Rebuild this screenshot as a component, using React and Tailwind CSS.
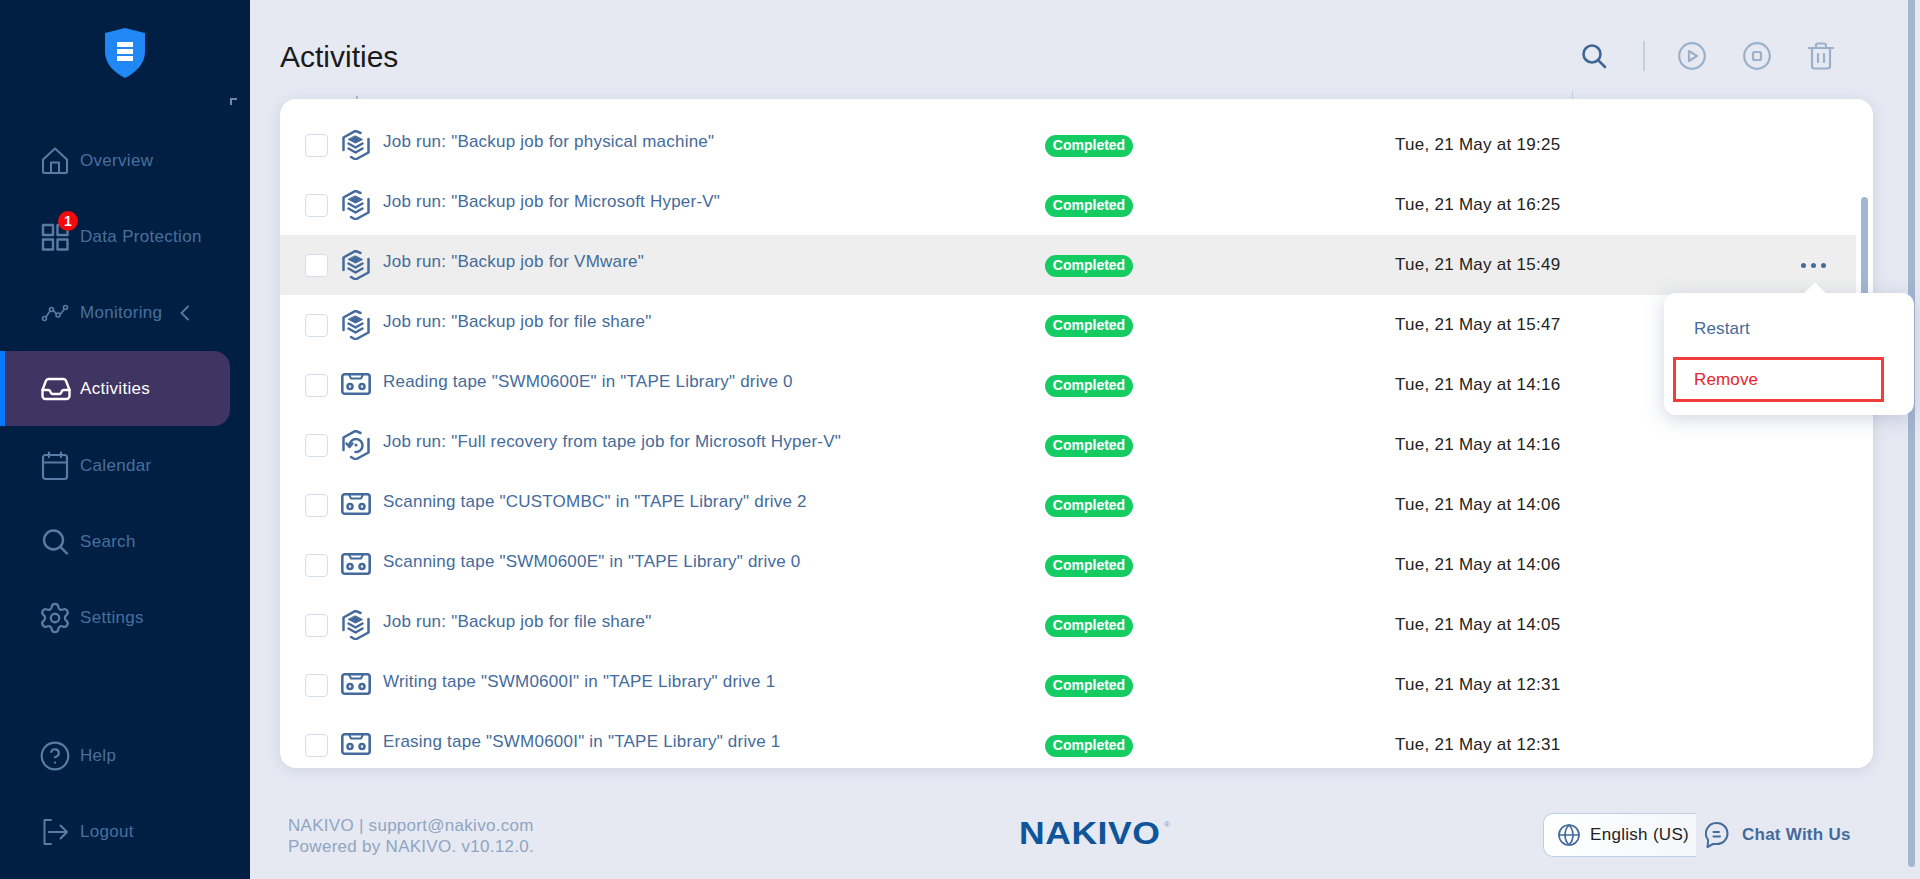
import React from "react";
import { Settings, CircleHelp, Globe } from "lucide-react";

const rows = [
  ["hex", 'Job run: "Backup job for physical machine"', "Tue, 21 May at 19:25"],
  ["hex", 'Job run: "Backup job for Microsoft Hyper-V"', "Tue, 21 May at 16:25"],
  ["hex", 'Job run: "Backup job for VMware"', "Tue, 21 May at 15:49"],
  ["hex", 'Job run: "Backup job for file share"', "Tue, 21 May at 15:47"],
  ["tape", 'Reading tape "SWM0600E" in "TAPE Library" drive 0', "Tue, 21 May at 14:16"],
  ["rec", 'Job run: "Full recovery from tape job for Microsoft Hyper-V"', "Tue, 21 May at 14:16"],
  ["tape", 'Scanning tape "CUSTOMBC" in "TAPE Library" drive 2', "Tue, 21 May at 14:06"],
  ["tape", 'Scanning tape "SWM0600E" in "TAPE Library" drive 0', "Tue, 21 May at 14:06"],
  ["hex", 'Job run: "Backup job for file share"', "Tue, 21 May at 14:05"],
  ["tape", 'Writing tape "SWM0600I" in "TAPE Library" drive 1', "Tue, 21 May at 12:31"],
  ["tape", 'Erasing tape "SWM0600I" in "TAPE Library" drive 1', "Tue, 21 May at 12:31"],
];

const Hexagon = () => (
  <>
    <path d="M18.5 3 L13.5 0.8 L1.5 7.5 V20" />
    <path d="M26.5 9 V22.5 L13.5 29.5 L9 27" />
  </>
);

function HexIcon() {
  return (
    <svg width="28" height="30" viewBox="0 0 28 30" fill="none" stroke="#446b9b" strokeWidth="2.5" strokeLinejoin="round" strokeLinecap="round">
      <Hexagon />
      <path d="M13.5 6 L20.5 9.5 L13.5 13 L6.5 9.5 Z" fill="#446b9b" strokeWidth="1" />
      <path d="M6.5 13.5 L13.5 17.5 L20.5 13.5" />
      <path d="M6.5 18.5 L13.5 22.5 L20.5 18.5" />
    </svg>
  );
}

function RecIcon() {
  return (
    <svg width="28" height="30" viewBox="0 0 28 30" fill="none" stroke="#446b9b" strokeWidth="2.5" strokeLinejoin="round" strokeLinecap="round">
      <Hexagon />
      <path d="M7.5 15.5 a6.5 6.5 0 1 1 6 6.5" />
      <path d="M4.5 13.5 L7.5 17 L10.5 13.5" />
      <circle cx="14" cy="15" r="1.6" fill="#446b9b" stroke="none" />
    </svg>
  );
}

function TapeIcon() {
  return (
    <svg width="30" height="22" viewBox="0 0 30 22" fill="none" stroke="#446b9b" strokeWidth="2.6" strokeLinejoin="round" className="mb-[3px]">
      <rect x="1.3" y="1.3" width="27.4" height="19.4" rx="2.5" />
      <path d="M8 1.5 L10 5.5 H20 L22 1.5" strokeWidth="2" />
      <circle cx="9" cy="13.5" r="2.5" />
      <circle cx="21" cy="13.5" r="2.5" />
    </svg>
  );
}

const nav = "#5a7ba3";

function NavSvg({ w = 28, h = 28, color = nav, sw = 2, children }) {
  return (
    <svg width={w} height={h} viewBox={`0 0 ${w} ${h}`} fill="none" stroke={color} strokeWidth={sw} strokeLinecap="round" strokeLinejoin="round">
      {children}
    </svg>
  );
}

const icons = {
  home: (
    <NavSvg>
      <path d="M2 12.5 L14 1.5 L26 12.5 V24.5 a1.5 1.5 0 0 1 -1.5 1.5 H3.5 a1.5 1.5 0 0 1 -1.5 -1.5 Z" />
      <path d="M10 26 V15.5 H18 V26" />
    </NavSvg>
  ),
  data: (
    <NavSvg sw={2.4}>
      <rect x="2" y="2" width="10" height="10" />
      <rect x="16.5" y="2" width="10" height="10" />
      <rect x="2" y="16.5" width="10" height="10" />
      <rect x="16.5" y="16.5" width="10" height="10" />
    </NavSvg>
  ),
  mon: (
    <NavSvg h={18} sw={1.6}>
      <path d="M5 13 L9 7 M12 6 L15.5 10 M19 10.5 L23.5 5" />
      <circle cx="3.5" cy="14.5" r="2" />
      <circle cx="10.5" cy="5.5" r="2" />
      <circle cx="17" cy="11" r="2" />
      <circle cx="24.5" cy="3.5" r="2" />
    </NavSvg>
  ),
  act: (
    <NavSvg h={24} w={30} color="#ffffff" sw={2.4}>
      <path d="M8 2 H22 a3.5 3.5 0 0 1 3.2 2.2 L28.5 13 V19 a3 3 0 0 1 -3 3 H4.5 a3 3 0 0 1 -3 -3 V13 L4.8 4.2 A3.5 3.5 0 0 1 8 2 Z" />
      <path d="M1.5 13 H7 Q9 13 9.5 15 Q10 17 12 17 H18 Q20 17 20.5 15 Q21 13 23 13 H28.5" />
    </NavSvg>
  ),
  cal: (
    <NavSvg h={30} sw={2.2}>
      <rect x="2" y="4" width="24" height="24" rx="2.5" />
      <path d="M2 11.5 H26 M8 1.5 V6 M20 1.5 V6" />
    </NavSvg>
  ),
  search: (
    <NavSvg sw={2.4}>
      <circle cx="12.5" cy="12" r="9.5" />
      <path d="M19.5 19 L26 25.5" />
    </NavSvg>
  ),
};

function NavItem({ icon, label, active, children }) {
  if (active) {
    return (
      <div className="h-[77px] flex items-start">
        <div className="h-[75px] w-[230px] flex items-center pl-[36px] border-l-[5px] border-[#0a78ff] bg-[#3f3563] rounded-r-[16px] text-white text-[17px] tracking-[0.3px]">
          <span className="w-[39px] flex items-center">{icon}</span>
          <span>{label}</span>
        </div>
      </div>
    );
  }
  return (
    <div className="h-[76px] flex items-center pl-[41px] text-[#4a6f9e] text-[17px] tracking-[0.3px]">
      <span className="w-[39px] flex items-center relative">{icon}{children}</span>
      <span>{label}</span>
      {label === "Monitoring" && (
        <svg width="10" height="16" viewBox="0 0 10 16" fill="none" stroke={nav} strokeWidth="1.8" className="ml-[18px]">
          <path d="M8.5 1 L1.5 8 L8.5 15" />
        </svg>
      )}
    </div>
  );
}

function Row({ kind, text, date, hover }) {
  return (
    <div className={`h-[60px] w-[1576px] shrink-0 flex items-center pl-[25px] ${hover ? "bg-[#eeeeee]" : ""}`}>
      <div className="w-[23px] h-[23px] rounded-[4px] border border-[#d5dfec] bg-white shrink-0" />
      <div className="w-[30px] ml-[13px] mr-[12px] flex justify-center shrink-0">
        {kind === "hex" ? <HexIcon /> : kind === "rec" ? <RecIcon /> : <TapeIcon />}
      </div>
      <div className="w-[662px] shrink-0 pb-[7px] text-[17px] tracking-[0.22px] text-[#446b9b] whitespace-nowrap">{text}</div>
      <div className="w-[350px] shrink-0">
        <span className="inline-flex items-center justify-center w-[88px] h-[22px] rounded-full bg-[#14cc62] text-white text-[14px] font-bold">Completed</span>
      </div>
      <div className="flex-1 text-[17px] tracking-[0.27px] text-[#222222] whitespace-nowrap">{date}</div>
      {hover && (
        <div className="flex gap-[5px] mr-[30px]">
          <span className="w-[5px] h-[5px] rounded-full bg-[#446b9b]" />
          <span className="w-[5px] h-[5px] rounded-full bg-[#446b9b]" />
          <span className="w-[5px] h-[5px] rounded-full bg-[#446b9b]" />
        </div>
      )}
    </div>
  );
}

export default function App() {
  return (
    <div className="relative w-[1920px] h-[879px] overflow-hidden flex bg-[#e6e9f2] font-['Liberation_Sans',Arial,sans-serif]">
      {/* Sidebar */}
      <aside className="w-[250px] shrink-0 bg-[#001f42] flex flex-col pb-[9px]">
        <div className="relative h-[123px] pt-[28px] flex justify-center">
          <svg width="40" height="50" viewBox="0 0 40 50">
            <path d="M20 0 L40 5 V24 C40 36 30 45 20 50 C10 45 0 36 0 24 V5 Z" fill="#2187f5" />
            <rect x="12" y="14" width="16" height="5" fill="#fff" />
            <rect x="12" y="21" width="16" height="5" fill="#fff" />
            <rect x="12" y="28" width="16" height="5" fill="#fff" />
          </svg>
          <div className="absolute left-[230px] top-[98px] w-[7px] h-[7px] border-l-[2px] border-t-[2px] border-[#6d88a8]" />
        </div>
        <NavItem icon={icons.home} label="Overview" />
        <NavItem icon={icons.data} label="Data Protection">
          <span className="absolute left-[17px] -top-[12px] w-[20px] h-[20px] rounded-full bg-[#f40a0e] text-white text-[14px] font-bold flex items-center justify-center">1</span>
        </NavItem>
        <NavItem icon={icons.mon} label="Monitoring" />
        <NavItem icon={icons.act} label="Activities" active />
        <NavItem icon={icons.cal} label="Calendar" />
        <NavItem icon={icons.search} label="Search" />
        <NavItem icon={<Settings size={34} color={nav} strokeWidth={1.6} className="-ml-[3px]" />} label="Settings" />
        <div className="mt-auto">
          <NavItem icon={<CircleHelp size={32} color={nav} strokeWidth={1.6} className="-ml-[2px]" />} label="Help" />
          <NavItem
            icon={
              <NavSvg>
                <path d="M10 2 H3.5 V26 H10" />
                <path d="M8 14 H26 M19.5 7.5 L26 14 L19.5 20.5" />
              </NavSvg>
            }
            label="Logout"
          />
        </div>
      </aside>

      {/* Main */}
      <main className="flex-1 min-w-0 flex flex-col pl-[30px] pr-[35px]">
        <header className="relative h-[99px] shrink-0 flex items-start">
          <h1 className="mt-[39px] text-[30px] leading-[36px] text-[#1a1a1a] font-normal">Activities</h1>
          <div className="ml-auto mt-[41px] mr-[39px] flex items-center h-[30px]">
            <svg width="26" height="26" viewBox="0 0 26 26" fill="none" stroke="#3f6795" strokeWidth="2.6" strokeLinecap="round" className="ml-[1px]">
              <circle cx="11" cy="11" r="8.5" />
              <path d="M17.5 17.5 L24 24" />
            </svg>
            <div className="w-[2px] h-[30px] bg-[#c2d0e0] ml-[36px] mr-[33px]" />
            <svg width="28" height="28" viewBox="0 0 28 28" fill="none" stroke="#9ab0cb" strokeWidth="2.2" strokeLinejoin="round">
              <circle cx="14" cy="14" r="12.8" />
              <path d="M11 9 L19 14 L11 19 Z" />
            </svg>
            <svg width="28" height="28" viewBox="0 0 28 28" fill="none" stroke="#9ab0cb" strokeWidth="2.2" strokeLinejoin="round" className="ml-[37px]">
              <circle cx="14" cy="14" r="12.8" />
              <rect x="10" y="10" width="8" height="8" rx="1.5" />
            </svg>
            <svg width="26" height="28" viewBox="0 0 26 28" fill="none" stroke="#9ab0cb" strokeWidth="2.2" strokeLinecap="round" strokeLinejoin="round" className="ml-[37px]">
              <path d="M1 6 H25 M8 6 V3.5 a2 2 0 0 1 2 -2 H16 a2 2 0 0 1 2 2 V6" />
              <path d="M4 6 V24 a2.5 2.5 0 0 0 2.5 2.5 H19.5 a2.5 2.5 0 0 0 2.5 -2.5 V6" />
              <path d="M10 12 V20 M16 12 V20" />
            </svg>
          </div>
          <div className="absolute left-[76px] bottom-0 w-[2px] h-[3px] bg-[#a9bad0]" />
          <div className="absolute left-[1292px] bottom-0 w-px h-[8px] bg-[#c2d0e0]" />
        </header>

        <section className="relative h-[669px] shrink-0 bg-white rounded-[16px] overflow-hidden pt-[16px] flex flex-col shadow-[0_2px_14px_rgba(120,135,170,0.22)]">
          {rows.map((r, i) => (
            <Row key={i} kind={r[0]} text={r[1]} date={r[2]} hover={i === 2} />
          ))}
          <div className="absolute left-[1581px] top-[98px] w-[7px] h-[190px] rounded-full bg-[#a3b5cf]" />
        </section>

        <footer className="flex items-start pt-[46px] pl-[8px]">
          <div className="w-[731px] mt-[1px] shrink-0 text-[17px] leading-[21px] tracking-[0.28px] text-[#8fa5c2]">
            <div>NAKIVO | support@nakivo.com</div>
            <div>Powered by NAKIVO. v10.12.0.</div>
          </div>
          <div className="w-[151px] shrink-0 relative flex items-start text-[#0f5599] mt-[7px]">
            <span className="text-[32px] leading-[25px] font-bold origin-left scale-x-[1.11] tracking-[0.5px] whitespace-nowrap">NAKIVO</span>
            <span className="absolute right-0 top-0 text-[8px] leading-[8px] text-[#7f9bbd]">®</span>
          </div>
          <div className="ml-[373px] w-[153px] h-[44px] -mt-[1px] shrink-0 flex items-center pl-[13px] rounded-l-[10px] border border-r-0 border-[#bcd0e6] bg-gradient-to-r from-white to-[#f4f6fa] text-[17px] tracking-[0.3px] text-[#222222] whitespace-nowrap">
            <Globe size={24} color="#446b9b" strokeWidth={1.7} />
            <span className="ml-[9px]">English (US)</span>
          </div>
          <div className="ml-[9px] h-[44px] -mt-[1px] flex items-center text-[#446b9b] text-[17px] font-bold tracking-[0.25px] whitespace-nowrap">
            <svg width="24" height="28" viewBox="0 0 24 28" fill="none" stroke="#446b9b" strokeWidth="2" strokeLinecap="round" strokeLinejoin="round">
              <path d="M12 2 a10.5 10.5 0 0 1 0 21 H8 L2.5 26 L3.2 19 A10.5 10.5 0 0 1 12 2 Z" />
              <path d="M8.5 11 H14 M8.5 15.5 H15" />
            </svg>
            <span className="ml-[13px]">Chat With Us</span>
          </div>
        </footer>
      </main>

      {/* Page scrollbar */}
      <div className="w-[7px] h-[867px] mr-[5px] rounded-b-full bg-[#a3b5cf] shrink-0" />

      {/* Row action menu */}
      <div className="absolute left-[1664px] top-[293px] w-[250px] h-[122px] bg-white rounded-[12px] shadow-[0_4px_20px_rgba(100,120,160,0.3)] flex flex-col">
        <div className="absolute left-[142px] -top-[7px] w-[18px] h-[18px] rotate-45 bg-white" />
        <div className="relative h-[64px] pt-[7px] pl-[30px] flex items-center text-[#446b9b] text-[17px] tracking-[0.15px]">Restart</div>
        <div className="relative ml-[9px] w-[211px] h-[45px] pl-[18px] flex items-center border-[3px] border-[#f33d3d] text-[#e8242b] text-[17px] tracking-[0.15px]">Remove</div>
      </div>
    </div>
  );
}
